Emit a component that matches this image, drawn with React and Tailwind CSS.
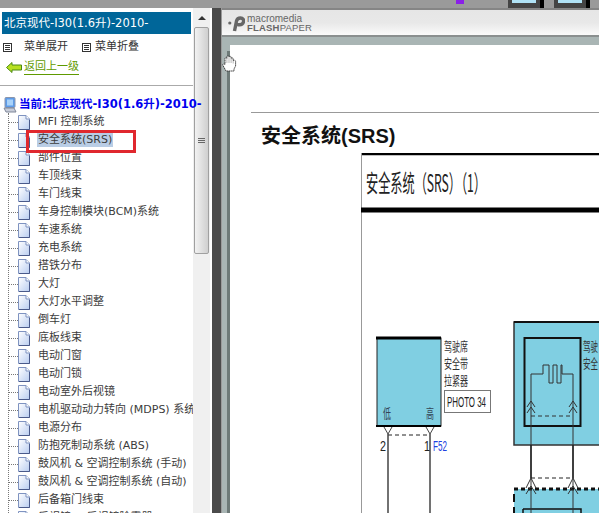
import React from 'react';

const items = [
  'MFI 控制系统',
  '安全系统(SRS)',
  '部件位置',
  '车顶线束',
  '车门线束',
  '车身控制模块(BCM)系统',
  '车速系统',
  '充电系统',
  '搭铁分布',
  '大灯',
  '大灯水平调整',
  '倒车灯',
  '底板线束',
  '电动门窗',
  '电动门锁',
  '电动室外后视镜',
  '电机驱动动力转向 (MDPS) 系统',
  '电源分布',
  '防抱死制动系统 (ABS)',
  '鼓风机 & 空调控制系统 (手动)',
  '鼓风机 & 空调控制系统 (自动)',
  '后备箱门线束',
  '后视镜 & 后视镜除雾器',
];

const DocIcon = () => (
  <svg width="12" height="15" viewBox="0 0 12 15" className="shrink-0">
    <defs>
      <linearGradient id="docFill" x1="0" y1="0" x2="1" y2="1">
        <stop offset="0" stopColor="#ffffff" />
        <stop offset="1" stopColor="#b9cdf0" />
      </linearGradient>
    </defs>
    <path d="M0.5 0.5H8L11.5 4V14.5H0.5Z" fill="url(#docFill)" stroke="#7f93c0" />
    <path d="M8 0.5V4H11.5" fill="#ffffff" stroke="#7f93c0" />
    <path d="M1 14.5H11.5V5" fill="none" stroke="#4a5a8a" />
  </svg>
);

const MenuIcon = () => (
  <svg width="9" height="9" viewBox="0 0 9 9" className="block shrink-0">
    <rect x="0.5" y="0.5" width="8" height="8" fill="#ffffff" stroke="#333333" />
    <path d="M2 2.5H7M2 4.5H7M2 6.5H7" stroke="#333333" />
  </svg>
);

const Monitor = () => (
  <svg width="14" height="16" viewBox="0 0 14 16" className="shrink-0">
    <rect x="2" y="0.5" width="10" height="10" rx="1" fill="#5d9be8" stroke="#8b95ab" />
    <rect x="4" y="2.5" width="6" height="6" fill="#a9d3fa" />
    <path d="M1 11H11L13 15H3Z" fill="#c7ccd8" stroke="#7f8799" />
  </svg>
);

const TreeRow = ({ label, selected }) => (
  <div className="flex h-[18px] items-center relative">
    <div className="w-[10px] shrink-0 ml-[8px] border-t border-dotted border-[#777]" />
    <DocIcon />
    <span className={`ml-[7px] px-[1px] shrink-0 whitespace-nowrap text-[#3c3c3c] leading-[14px] ${selected ? 'bg-[#b9cde5]' : ''}`}>
      {label}
    </span>
  </div>
);

const Sidebar = () => (
  <div className="flex w-[212px] shrink-0 bg-white">
    <div className="relative w-[193px] shrink-0 text-[11px] [font-family:'DejaVu_Sans','Noto_Sans_CJK_SC',sans-serif]">
      <div className="mx-[2px] mt-[4px] h-[22px] bg-[#006699] text-white text-[11.5px] leading-[22px] pl-[2px] whitespace-nowrap">
        北京现代-I30(1.6升)-2010-
      </div>

      <div className="flex items-center h-[14px] mt-[6px] pl-[3px] text-[#333]">
        <MenuIcon />
        <span className="ml-[12px]">菜单展开</span>
        <span className="ml-[14px]"><MenuIcon /></span>
        <span className="ml-[4px]">菜单折叠</span>
      </div>

      <div className="flex items-center h-[16px] mt-[5px] pl-[6px]">
        <svg width="16" height="11" viewBox="0 0 16 11" className="shrink-0">
          <path d="M0.5 5.5L6 0.5V3H15.5V8H6V10.5Z" fill="#b7e020" stroke="#4a8a10" />
        </svg>
        <span className="ml-[2px] text-[#5f9a00] border-b border-[#5f9a00] leading-[14px]">返回上一级</span>
      </div>

      <div className="mt-[10px] border-t border-[#aaa]" />

      <div className="flex items-center h-[16px] mt-[11px] pl-[3px]">
        <Monitor />
        <span className="relative z-10 ml-[2px] font-bold text-[11.5px] text-[#0000ee] whitespace-nowrap w-[184px] shrink-0 overflow-hidden">
          当前:北京现代-I30(1.6升)-2010-
        </span>
      </div>

      <div className="relative h-[410px] overflow-hidden">
        <div className="absolute left-[8px] top-0 h-full border-l border-dotted border-[#777]" />
        {items.map((label, i) => (
          <TreeRow key={label} label={label} selected={i === 1} />
        ))}
      </div>

      {/* red annotation round the selected row */}
      <div className="absolute left-[26px] top-[122px] w-[110px] h-[23px] border-[3px] border-[#e0282e]" />
    </div>

    <div className="w-[17px] shrink-0 bg-[#f0f0f0] flex flex-col">
      <div className="h-[19px] flex items-center justify-center">
        <div className="w-0 h-0 border-x-[4px] border-x-transparent border-b-[4px] border-b-[#333]" />
      </div>
      <div className="w-[15px] ml-[1px] h-[227px] border border-[#a0a0a0] rounded-[2px] bg-gradient-to-r from-[#f2f2f2] to-[#cfcfcf] flex flex-col items-center justify-center gap-[1px]">
        <div className="w-[7px] h-px bg-[#666]" />
        <div className="w-[7px] h-px bg-[#666]" />
        <div className="w-[7px] h-px bg-[#666]" />
      </div>
    </div>
  </div>
);

const Diagram = () => (
  <svg width="238" height="361" viewBox="361 153 238 361" className="block ml-[131px] mt-[4px]">
    {/* frame and heading */}
    <path d="M361 154H599" stroke="#000" strokeWidth="2.5" />
    <path d="M361.5 153V514" stroke="#999" />
    <text x="366" y="192" fontSize="24" textLength="120" lengthAdjust="spacingAndGlyphs" fontFamily="'Noto Sans CJK SC', sans-serif" fill="#222">安全系统（SRS）（1）</text>
    <path d="M361 210H599" stroke="#000" strokeWidth="5" />

    {/* left component */}
    <rect x="377" y="338" width="64" height="88" fill="#80cfe2" stroke="#222" />
    <path d="M376 338H441" stroke="#000" strokeWidth="3" />
    <path d="M376 426H441" stroke="#000" strokeWidth="2" />
    <g fontFamily="'Noto Sans CJK SC', sans-serif" fill="#333">
      <text x="444" y="351" fontSize="13" textLength="24" lengthAdjust="spacingAndGlyphs">驾驶席</text>
      <text x="444" y="368" fontSize="13" textLength="24" lengthAdjust="spacingAndGlyphs">安全带</text>
      <text x="444" y="385" fontSize="13" textLength="24" lengthAdjust="spacingAndGlyphs">拉紧器</text>
      <text x="383" y="418" fontSize="13" textLength="8" lengthAdjust="spacingAndGlyphs" fill="#345">低</text>
      <text x="426" y="418" fontSize="13" textLength="8" lengthAdjust="spacingAndGlyphs" fill="#345">高</text>
    </g>
    <rect x="444.5" y="390.5" width="46" height="22" fill="#fff" stroke="#777" />
    <text x="447" y="407" fontSize="14" textLength="39" lengthAdjust="spacingAndGlyphs" fontFamily="'Liberation Sans', sans-serif" fill="#222">PHOTO 34</text>

    <path d="M384 427L388 434L392 427M426 427L430 434L434 427" fill="none" stroke="#444" />
    <path d="M388 435H430" stroke="#222" strokeDasharray="4 3" />
    <path d="M388 434V514M430 434V514" stroke="#444" strokeWidth="1.5" />
    <text x="380" y="451" fontSize="15" textLength="6" lengthAdjust="spacingAndGlyphs" fontFamily="'Liberation Sans', sans-serif" fill="#222">2</text>
    <text x="424" y="451" fontSize="15" textLength="6" lengthAdjust="spacingAndGlyphs" fontFamily="'Liberation Sans', sans-serif" fill="#222">1</text>
    <text x="433" y="451" fontSize="15" textLength="14" lengthAdjust="spacingAndGlyphs" fontFamily="'Liberation Sans', sans-serif" fill="#2040e0">F52</text>

    {/* right component */}
    <rect x="514" y="322" width="90" height="123" fill="#80cfe2" stroke="#333" strokeWidth="1.5" />
    <path d="M514 322H599" stroke="#111" strokeWidth="2" />
    <rect x="524.5" y="338" width="56" height="88" fill="#80cfe2" stroke="#111" strokeWidth="2" />
    <g fontFamily="'Noto Sans CJK SC', sans-serif" fill="#333">
      <text x="583" y="351" fontSize="13" textLength="15" lengthAdjust="spacingAndGlyphs">驾驶</text>
      <text x="583" y="368" fontSize="13" textLength="15" lengthAdjust="spacingAndGlyphs">安全</text>
    </g>
    <path d="M531 400V374H543V365H549V383H553V365H557V383H561V365H562V374H573V400" fill="none" stroke="#333" />
    <path d="M531 401L527 407M531 401L535 407M531 407L527 413M531 407L535 413M573 401L569 407M573 401L577 407M573 407L569 413M573 407L577 413" stroke="#333" />
    <path d="M531 416H573" stroke="#333" strokeDasharray="4 3" />
    <path d="M531 400V514M573 400V514" stroke="#333" />
    <path d="M531 445V478M573 445V478" stroke="#222" strokeWidth="1.5" />
    <path d="M531 478H573" stroke="#222" strokeDasharray="4 3" />
    <path d="M531 478L526 488M531 478L536 488M573 478L568 488M573 478L578 488" stroke="#333" />

    {/* lower dashed component */}
    <rect x="514" y="489" width="90" height="30" fill="#80cfe2" />
    <path d="M514 489H599" stroke="#111" strokeWidth="3" strokeDasharray="4 3" />
    <path d="M514 494V514" stroke="#111" strokeWidth="2" strokeDasharray="8 5" />
    <path d="M523 509H581V514M523 509V514" fill="none" stroke="#111" strokeWidth="1.5" />
    <path d="M531 489V514M573 489V514" stroke="#333" />
    <path d="M526 494L531 486L536 494M568 494L573 486L578 494" fill="none" stroke="#333" />
  </svg>
);

const Viewer = () => (
  <div className="flex-1 min-w-0 ml-[1px] border-t-2 border-[#858585] flex flex-col relative overflow-hidden">
    <div className="h-[27px] shrink-0 bg-gradient-to-b from-[#e6e6e6] via-[#e8e8e8] to-[#fafafa] border-b-2 border-[#8a8f8f] flex items-center pl-[6px] pt-[2px]">
      <svg width="17" height="16" viewBox="0 0 17 16" className="shrink-0">
        <circle cx="1.8" cy="7" r="1.6" fill="#666" />
        <path d="M6.5 15L8.5 5C9 3 10.5 2 12.5 2C15 2 16 3.8 15.5 5.8C15 8 12.5 9 9.5 8.5" fill="none" stroke="#666" strokeWidth="3.4" />
      </svg>
      <div className="ml-[2px] text-[#666] [font-family:'Liberation_Sans',sans-serif] leading-none">
        <div className="text-[10px] leading-[9px]">macromedia</div>
        <div className="text-[9.5px] leading-[10px] tracking-[0.2px]"><span className="font-bold">FLASH</span>PAPER</div>
      </div>
    </div>

    <div className="flex-1 flex min-h-0 bg-[#a9b5b4]">
      <div className="w-[8px] shrink-0 pt-[14px]">
        <div className="ml-[5px] w-[3px] h-full bg-[#6e7a78]" />
      </div>
      <div className="flex-1 min-w-0 mt-[8px] bg-white">
        <div className="ml-[21px] mt-[67px] border-t border-[#999]" />
        <div className="ml-[31px] mt-[11px] text-[20px] leading-[25px] font-bold text-[#111] whitespace-nowrap [font-family:'Liberation_Sans','Noto_Sans_CJK_SC',sans-serif]">
          安全系统(SRS)
        </div>
        <Diagram />
      </div>
    </div>

    {/* hand cursor lying over the page */}
    <svg width="15" height="17" viewBox="0 0 15 17" className="absolute left-0 top-[45px]">
      <path d="M4 16L1 10.5C0.3 9 1.8 8.2 3 9.5V3.5C3 2.3 4.9 2.3 4.9 3.5V1.8C4.9 0.6 7 0.6 7 1.8V2C7 1 9.1 1 9.1 2.2V3.6C9.1 2.6 11.2 2.6 11.2 3.8V6C11.2 5 13.6 5 13.6 6.5V11L12 14V16Z" fill="#ffffff" stroke="#333" strokeWidth="0.9" strokeDasharray="1.6 0.5" />
      <path d="M4.9 3.5V8M7 2V8M9.1 3.6V8M11.2 6V8.5" fill="none" stroke="#999" strokeWidth="0.7" />
    </svg>
  </div>
);

const ToolbarThumb = () => (
  <div className="w-[36px] h-[8px] bg-[#444] border-r-4 border-black flex items-start pl-[4px]">
    <div className="w-[24px] h-[3px] bg-[#b0e2f5]" />
  </div>
);

const App = () => {
  return (
    <div className="w-[599px] h-[513px] overflow-hidden bg-[#9a9a9a] flex flex-col">
      {/* bits of the window toolbar behind */}
      <div className="h-[8px] shrink-0 flex items-end justify-end">
        <div className="w-[8px] h-[4px] bg-[#8a20e8] mr-[44px] self-start" />
        <ToolbarThumb />
        <div className="w-[10px]" />
        <ToolbarThumb />
        <div className="w-[9px]" />
      </div>
      <div className="flex-1 min-h-0 flex">
        <Sidebar />
        <div className="w-[9px] shrink-0 bg-[#4b4b4b]" />
        <Viewer />
      </div>
    </div>
  );
};

export default App;
